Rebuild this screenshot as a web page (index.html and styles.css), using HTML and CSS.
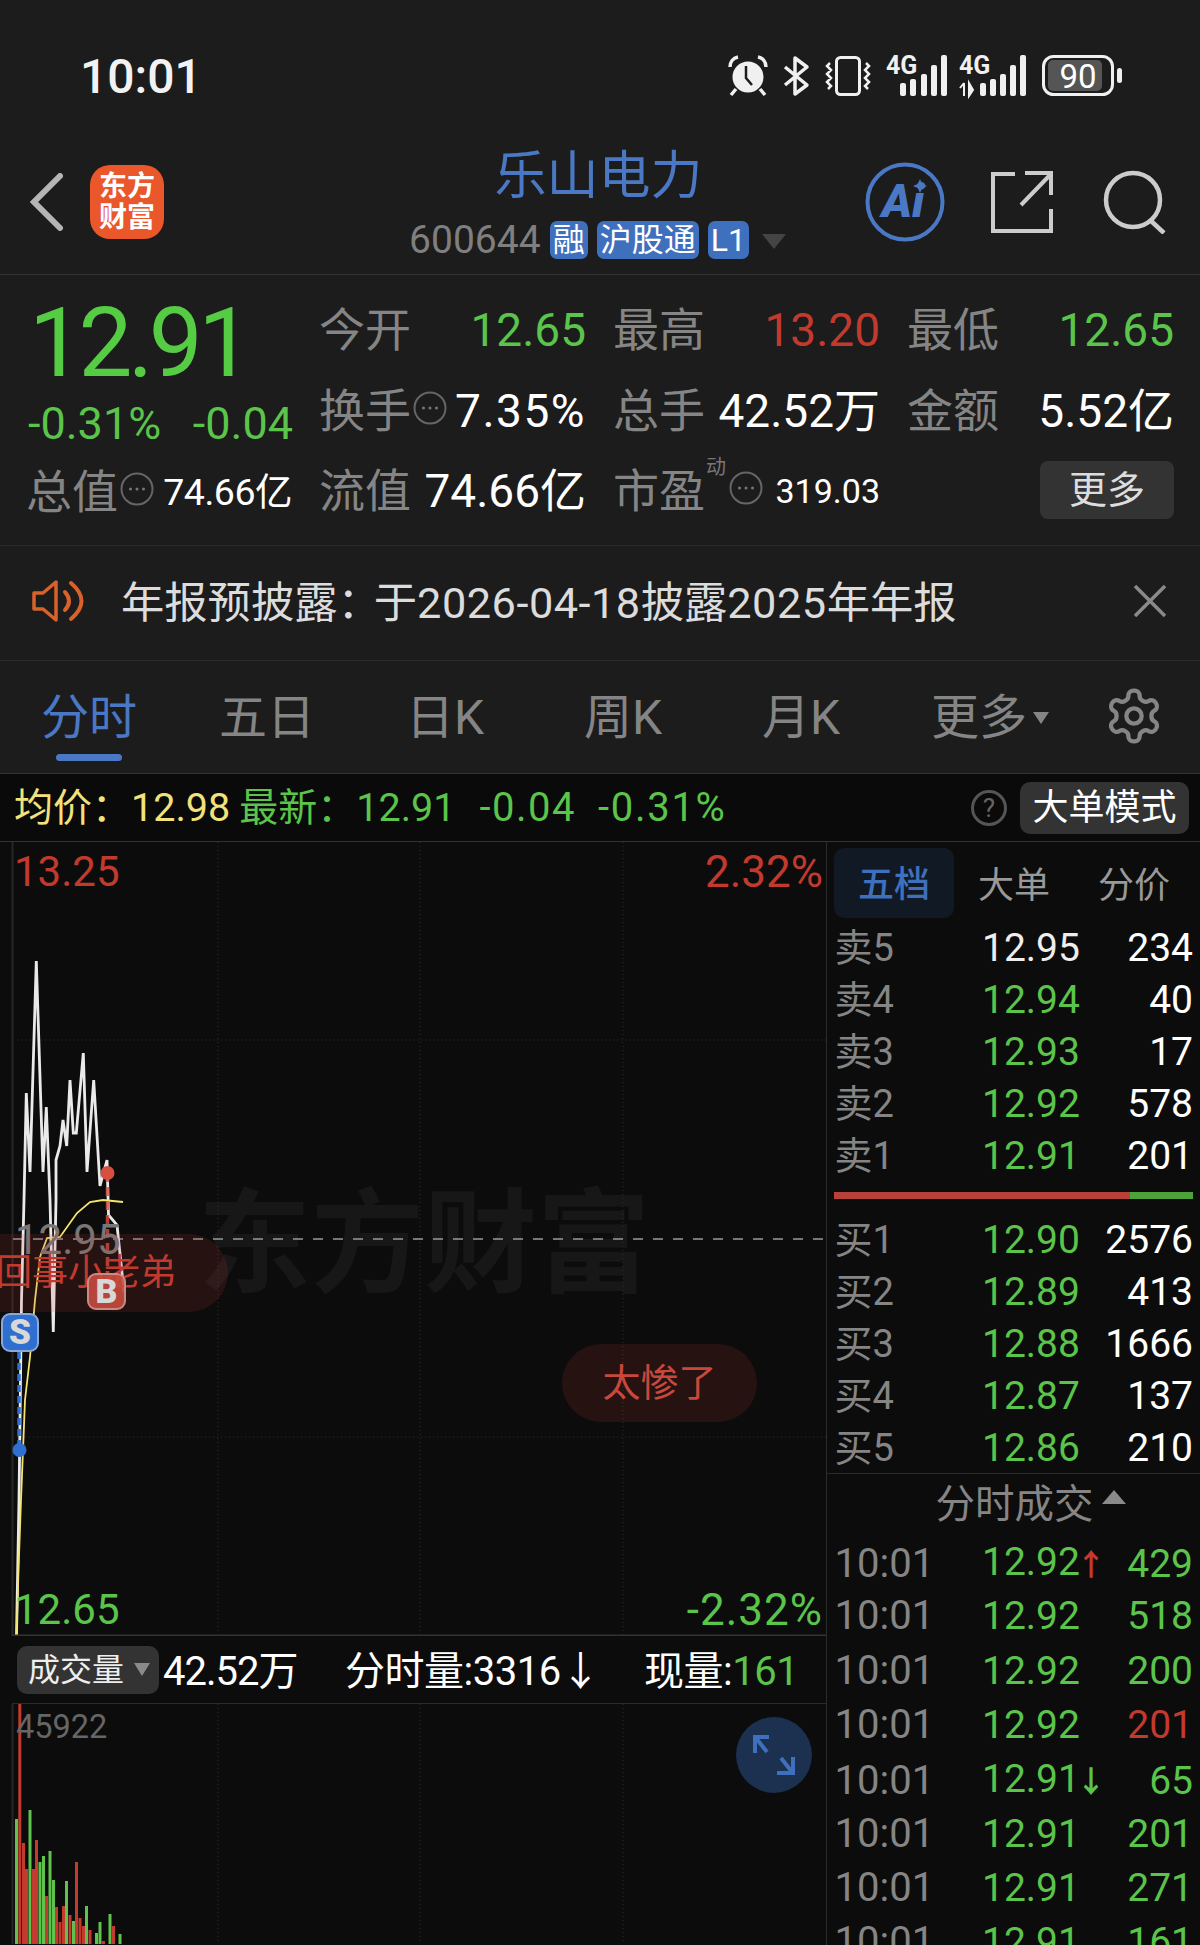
FILE: index.html
```html
<!DOCTYPE html>
<html lang="zh-CN">
<head>
<meta charset="utf-8">
<title>乐山电力</title>
<link rel="stylesheet" href="styles.css">
</head>
<body>
<svg class="defs" width="0" height="0">
  <symbol id="more" viewBox="0 0 34 34">
    <circle cx="17" cy="17" r="15.5" fill="none" stroke="#666" stroke-width="2"/>
    <circle cx="10.500" cy="17" r="1.500" fill="#777"/><circle cx="17" cy="17" r="1.500" fill="#777"/><circle cx="23.500" cy="17" r="1.500" fill="#777"/>
  </symbol>
</svg>
<div class="phone">
  <header class="status">
    <span class="clock">10:01</span>
    <div class="status-icons">
      <svg class="ic-alarm" width="38" height="40" viewBox="0 0 38 40"><circle cx="19" cy="21" r="15.500" fill="#f0f0f0"/><path d="M17 10v12l6 7" fill="none" stroke="#1c1c1c" stroke-width="2.500"/><path d="M1 11C1 6 4 2 9 1M37 11C37 6 34 2 29 1" fill="none" stroke="#f0f0f0" stroke-width="3.500"/><path d="M7 33l-5 6M31 33l5 6" stroke="#f0f0f0" stroke-width="3.500"/></svg>
      <svg class="ic-bt" width="27" height="40" viewBox="0 0 27 40"><path d="M2 11L24 29L12 38V2L24 11L2 29" fill="none" stroke="#f0f0f0" stroke-width="3.500" stroke-linejoin="round"/></svg>
      <svg class="ic-vib" width="46" height="40" viewBox="0 0 46 40"><rect x="11.500" y="1.500" width="23" height="37" rx="4" fill="none" stroke="#f0f0f0" stroke-width="3"/><path d="M5 7l-3 3 4 4-4 4 4 4-4 4 4 4-3 3M41 7l3 3-4 4 4 4-4 4 4 4-4 4 3 3" fill="none" stroke="#f0f0f0" stroke-width="2.500"/></svg>
      <svg class="ic-sig" width="61" height="41" viewBox="0 0 61 41"><text class="net" x="0" y="19">4G</text><rect x="14" y="28" width="6" height="13" rx="2"/><rect x="24" y="24" width="6" height="17" rx="2"/><rect x="35" y="19" width="6" height="22" rx="2"/><rect x="45" y="10" width="6" height="31" rx="2"/><rect x="55" y="0" width="6" height="41" rx="2"/></svg>
      <svg class="ic-sig" width="67" height="41" viewBox="0 0 67 41"><text class="net" x="0" y="19">4G</text><path d="M5 28v13M1 33l4-5M10 28v13l4-6z" stroke="#f0f0f0" stroke-width="2" fill="#f0f0f0"/><rect x="21" y="28" width="6" height="13" rx="2"/><rect x="31" y="24" width="6" height="17" rx="2"/><rect x="41" y="19" width="6" height="22" rx="2"/><rect x="51" y="10" width="6" height="31" rx="2"/><rect x="61" y="0" width="6" height="41" rx="2"/></svg>
      <svg class="ic-bat" width="80" height="41" viewBox="0 0 80 41"><rect x="6" y="5" width="54" height="31" rx="5" fill="#555"/><rect x="1.500" y="1.500" width="69" height="38" rx="10" fill="none" stroke="#f0f0f0" stroke-width="3"/><rect x="75" y="13" width="5" height="15" rx="2.500" fill="#f0f0f0"/><text class="bat" x="36" y="33" text-anchor="middle">90</text></svg>
    </div>
  </header>

  <nav class="nav">
    <div class="nav-left">
      <svg width="33" height="58" viewBox="0 0 33 58"><path d="M30 3L4 29l26 26" fill="none" stroke="#b5b5b5" stroke-width="6" stroke-linecap="round"/></svg>
      <div class="logo">东方<br>财富</div>
    </div>
    <div class="nav-mid">
      <div class="stock-name">乐山电力</div>
      <div class="stock-sub">
        <span class="code">600644</span>
        <span class="chip">融</span>
        <span class="chip">沪股通</span>
        <span class="chip">L1</span>
        <span class="tri-down"></span>
      </div>
    </div>
    <div class="nav-right">
      <svg width="80" height="80" viewBox="0 0 80 80"><circle cx="40" cy="40" r="37.500" fill="none" stroke="#4a78c4" stroke-width="4"/><text class="ai" x="38" y="55" text-anchor="middle">Ai</text><path d="M55 17l2.200 5 4.800 2-4.800 2-2.200 5-2.200-5-4.800-2 4.800-2z" fill="#4a78c4"/></svg>
      <svg class="share" width="62" height="62" viewBox="0 0 62 62"><path d="M24 3H2V60H60V38M30 34L59 4M34 2H60V24" fill="none" stroke="#ccc" stroke-width="4"/></svg>
      <svg class="search" width="64" height="64" viewBox="0 0 64 64"><circle cx="30" cy="30" r="27" fill="none" stroke="#ccc" stroke-width="4.500"/><path d="M47 50l14 13" stroke="#ccc" stroke-width="4.500"/></svg>
    </div>
  </nav>

  <section class="quote">
    <div class="quote-left">
      <div class="price">12.91</div>
      <div class="change"><span>-0.31%</span><span>-0.04</span></div>
      <div class="cell"><span class="lbl">总值<svg class="more"><use href="#more"/></svg></span><span class="val small">74.66亿</span></div>
    </div>
    <div class="quote-grid">
      <div class="cell"><span class="lbl">今开</span><span class="val green">12.65</span></div>
      <div class="cell"><span class="lbl">最高</span><span class="val red">13.20</span></div>
      <div class="cell"><span class="lbl">最低</span><span class="val green">12.65</span></div>
      <div class="cell"><span class="lbl">换手<svg class="more"><use href="#more"/></svg></span><span class="val spaced">7.35%</span></div>
      <div class="cell"><span class="lbl">总手</span><span class="val">42.52万</span></div>
      <div class="cell"><span class="lbl">金额</span><span class="val">5.52亿</span></div>
      <div class="cell"><span class="lbl">流值</span><span class="val">74.66亿</span></div>
      <div class="cell"><span class="lbl">市盈<sup class="dyn">动</sup><svg class="more"><use href="#more"/></svg></span><span class="val tiny">319.03</span></div>
      <div class="cell end"><button class="more-btn">更多</button></div>
    </div>
  </section>

  <section class="notice">
    <svg width="56" height="44" viewBox="0 0 56 44"><path d="M2 14H11L24 3V41L11 30H2Z" fill="none" stroke="#d9622b" stroke-width="3.500" stroke-linejoin="round"/><path d="M33 13Q41 22 33 31M39 4Q60 22 39 40" fill="none" stroke="#d9622b" stroke-width="4" stroke-linecap="round"/></svg>
    <span class="notice-text">年报预披露<span class="tight">：</span>于<span class="num">2026-04-18</span>披露<span class="num">2025</span>年年报</span>
    <svg class="notice-x" width="36" height="36" viewBox="0 0 36 36"><path d="M3 3l30 30M33 3L3 33" stroke="#8a8a8a" stroke-width="3.500"/></svg>
  </section>

  <nav class="tabs">
    <span class="tab active">分时</span>
    <span class="tab">五日</span>
    <span class="tab">日K</span>
    <span class="tab">周K</span>
    <span class="tab">月K</span>
    <span class="tab wide">更多<i class="tab-tri"></i></span>
    <svg class="gear" width="56" height="56" viewBox="1 1 22 22"><path d="M12.220 2h-.44a2 2 0 0 0-2 2v.18a2 2 0 0 1-1 1.730l-.43.25a2 2 0 0 1-2 0l-.15-.08a2 2 0 0 0-2.730.73l-.22.38a2 2 0 0 0 .73 2.730l.15.1a2 2 0 0 1 1 1.720v.51a2 2 0 0 1-1 1.740l-.15.09a2 2 0 0 0-.73 2.730l.22.38a2 2 0 0 0 2.730.73l.15-.08a2 2 0 0 1 2 0l.43.25a2 2 0 0 1 1 1.730V20a2 2 0 0 0 2 2h.44a2 2 0 0 0 2-2v-.18a2 2 0 0 1 1-1.730l.43-.25a2 2 0 0 1 2 0l.15.08a2 2 0 0 0 2.730-.73l.22-.39a2 2 0 0 0-.73-2.730l-.15-.08a2 2 0 0 1-1-1.740v-.5a2 2 0 0 1 1-1.740l.15-.09a2 2 0 0 0 .73-2.730l-.22-.38a2 2 0 0 0-2.730-.73l-.15.08a2 2 0 0 1-2 0l-.43-.25a2 2 0 0 1-1-1.730V4a2 2 0 0 0-2-2z" fill="none" stroke="#858585" stroke-width="1.700"/><circle cx="12" cy="12" r="3" fill="none" stroke="#858585" stroke-width="1.700"/></svg>
  </nav>

  <div class="infobar">
    <span class="yellow">均价：</span><span class="yellow ib-a">12.98</span>
    <span class="green ib-b">最新：</span><span class="green ib-c">12.91</span>
    <span class="green ib-d">-0.04</span><span class="green ib-e">-0.31%</span>
    <span class="help">?</span>
    <button class="mode-btn">大单模式</button>
  </div>

  <main class="board">
    <div class="chart-col">
      <div class="chart">
        <div class="watermark">东方财富</div>
        <svg class="chart-svg" width="826" height="794" viewBox="0 842 826 794">
          <path d="M12.500 842V1636" stroke="#262626" stroke-width="2"/>
          <path class="dots" d="M218 842V1636M420 842V1636M623 842V1636M13 1040H826M13 1437H826"/>
          <path d="M13 1239H826" stroke="#9a9a9a" stroke-width="1.500" stroke-dasharray="10 10"/>
          <polyline class="line-white" points="16.500,1636 19,1500 21.500,1300 24,1200 26.300,1093 30,1172 36.300,961 43,1172 46.300,1107 50,1200 53.300,1332 56,1200 56,1160 60,1146 63,1120 66.700,1146 70,1080 73.300,1133 76.300,1133 83.300,1053 87,1172 93.700,1080 100,1186 107,1160 108.500,1215 117,1225 124,1292"/>
          <polyline class="line-yellow" points="16.500,1636 18.500,1570 21,1500 25,1400 30,1357 35,1300 40,1257 47,1238 60,1237 77,1213 90,1202 103,1200 123,1202"/>
          <path d="M19 1352V1450" stroke="#2f6fd0" stroke-width="3.500" stroke-dasharray="7 4"/>
          <path d="M107.500 1173V1273" stroke="#d6503f" stroke-width="3.500" stroke-dasharray="9 5" opacity=".8"/>
          <circle cx="107.500" cy="1173" r="7" fill="#d6503f"/>
          <circle cx="19.500" cy="1450" r="7" fill="#2f6fd0"/>
          <path d="M12 1635.500H826" stroke="#333" stroke-width="2"/>
        </svg>
        <span class="ax tl red">13.25</span>
        <span class="ax tr red">2.32%</span>
        <span class="ax bl green">12.65</span>
        <span class="ax br green">-2.32%</span>
        <span class="ax mid">12.95</span>
        <div class="pill pill-a"><span>回事小老弟</span></div>
        <div class="pill pill-b">太惨了</div>
        <span class="mark mark-b">B</span>
        <span class="mark mark-s">S</span>
      </div>
      <div class="vol-head">
        <button class="vol-btn">成交量<i class="vol-tri"></i></button>
        <span class="vh-a">42.52万</span>
        <span class="vh-b">分时量:3316↓</span>
        <span class="vh-c">现量:<em class="green">161</em></span>
      </div>
      <div class="vol">
        <svg class="vol-svg" width="826" height="240" viewBox="0 1705 826 240">
          <path d="M12.500 1705V1945" stroke="#262626" stroke-width="2"/>
          <path class="dots" d="M218 1705V1945M420 1705V1945M623 1705V1945"/>
          <g class="bars-g">
            <rect x="15" y="1820" width="3" height="125"/><rect x="28.500" y="1811" width="3" height="134"/><rect x="38.500" y="1863" width="3" height="82"/><rect x="42" y="1857" width="3" height="88"/><rect x="48.500" y="1852" width="3" height="93"/><rect x="52" y="1881" width="3" height="64"/><rect x="65" y="1882" width="3" height="63"/><rect x="72" y="1922" width="3" height="23"/><rect x="85" y="1907" width="3" height="38"/><rect x="95" y="1934" width="3" height="11"/><rect x="98.500" y="1923" width="3" height="22"/><rect x="108.500" y="1915" width="3" height="30"/><rect x="118.500" y="1935" width="3" height="10"/>
          </g>
          <g class="bars-r">
            <rect x="18.300" y="1705" width="3" height="240"/><rect x="22" y="1844" width="3" height="101"/><rect x="25" y="1870" width="3" height="75"/><rect x="32" y="1870" width="3" height="75"/><rect x="35" y="1841" width="3" height="104"/><rect x="45" y="1897" width="3" height="48"/><rect x="55" y="1908" width="3" height="37"/><rect x="58.500" y="1923" width="3" height="22"/><rect x="62" y="1907" width="3" height="38"/><rect x="68.500" y="1916" width="3" height="29"/><rect x="75" y="1863" width="3" height="82"/><rect x="78.500" y="1919" width="3" height="26"/><rect x="82" y="1927" width="3" height="18"/><rect x="88.500" y="1931" width="3" height="14"/><rect x="102" y="1942" width="3" height="3"/><rect x="112" y="1927" width="3" height="18"/>
          </g>
        </svg>
        <span class="vol-max">45922</span>
        <svg class="expand" width="76" height="76" viewBox="0 0 76 76"><circle cx="38" cy="38" r="38" fill="#1c3050"/><path d="M19 36V20H33M20 21L31 35M57 40V56H41M56 55L45 41" fill="none" stroke="#3f70bd" stroke-width="4"/></svg>
      </div>
    </div>

    <aside class="book">
      <div class="book-tabs">
        <span class="bt active">五档</span>
        <span class="bt">大单</span>
        <span class="bt">分价</span>
      </div>
      <div class="rows">
        <div class="row"><span class="k">卖5</span><span class="p white">12.95</span><span class="q">234</span></div>
        <div class="row"><span class="k">卖4</span><span class="p">12.94</span><span class="q">40</span></div>
        <div class="row"><span class="k">卖3</span><span class="p">12.93</span><span class="q">17</span></div>
        <div class="row"><span class="k">卖2</span><span class="p">12.92</span><span class="q">578</span></div>
        <div class="row"><span class="k">卖1</span><span class="p">12.91</span><span class="q">201</span></div>
      </div>
      <div class="ratio"><span class="ratio-r"></span><span class="ratio-g"></span></div>
      <div class="rows">
        <div class="row"><span class="k">买1</span><span class="p">12.90</span><span class="q">2576</span></div>
        <div class="row"><span class="k">买2</span><span class="p">12.89</span><span class="q">413</span></div>
        <div class="row"><span class="k">买3</span><span class="p">12.88</span><span class="q">1666</span></div>
        <div class="row"><span class="k">买4</span><span class="p">12.87</span><span class="q">137</span></div>
        <div class="row"><span class="k">买5</span><span class="p">12.86</span><span class="q">210</span></div>
      </div>
      <div class="trades-head">分时成交<i class="tri-up"></i></div>
      <div class="trades">
        <div class="row tr"><span class="k">10:01</span><span class="p">12.92<b class="up">↑</b></span><span class="q green">429</span></div>
        <div class="row tr"><span class="k">10:01</span><span class="p">12.92</span><span class="q green">518</span></div>
        <div class="row tr"><span class="k">10:01</span><span class="p">12.92</span><span class="q green">200</span></div>
        <div class="row tr"><span class="k">10:01</span><span class="p">12.92</span><span class="q red">201</span></div>
        <div class="row tr"><span class="k">10:01</span><span class="p">12.91<b class="down">↓</b></span><span class="q green">65</span></div>
        <div class="row tr"><span class="k">10:01</span><span class="p">12.91</span><span class="q green">201</span></div>
        <div class="row tr"><span class="k">10:01</span><span class="p">12.91</span><span class="q green">271</span></div>
        <div class="row tr"><span class="k">10:01</span><span class="p">12.91</span><span class="q green">161</span></div>
      </div>
    </aside>
  </main>
</div>
</body>
</html>
```

FILE: styles.css
```css
* { box-sizing: border-box; }
html, body { margin: 0; padding: 0; height: 1945px; overflow: hidden; background: #1c1c1c; }
body, button { font-family: Roboto, "Noto Sans CJK SC", sans-serif; }
button { border: 0; padding: 0; }
.defs { position: absolute; }
.phone { width: 1200px; height: 1945px; overflow: hidden; display: flex; flex-direction: column; }
.green { color: #5bc44a; }
.red { color: #c23a2e; }
.yellow { color: #f2e27a; }
.white { color: #eee; }
em { font-style: normal; }

/* status */
.status { height: 130px; padding: 23px 78px 0 80px; display: flex; align-items: center; justify-content: space-between; flex: none; }
.clock { font-size: 48px; font-weight: 500; color: #f2f2f2; line-height: 60px; }
.status-icons { display: flex; align-items: center; gap: 16px; margin-top: -2px; }
.status-icons svg { display: block; overflow: visible; }
.ic-bt { margin-right: -1px; }
.ic-sig { fill: #f0f0f0; margin-left: -1px; }
.ic-sig + .ic-sig { margin-left: -4px; }
.net { font: 700 25px "Liberation Sans Narrow", Roboto, sans-serif; fill: #f0f0f0; }
.bat { font: 400 33px Roboto, sans-serif; fill: #fff; }

/* nav */
.nav { height: 145px; flex: none; border-bottom: 1px solid #333; display: grid; grid-template-columns: 1fr auto 1fr; align-items: center; padding: 0 33px 0 30px; }
.nav-left { display: flex; align-items: center; gap: 27px; }
.logo { width: 74px; height: 74px; border-radius: 20px; background: #e9572b; color: #fff; font-size: 28px; font-weight: 700; line-height: 31px; text-align: center; padding-top: 4px; font-family: "Noto Sans CJK SC", sans-serif; }
.nav-mid { display: flex; flex-direction: column; align-items: center; gap: 13px; }
.stock-name { font-size: 52px; line-height: 62px; color: #4a78c4; }
.stock-sub { display: flex; align-items: center; height: 38px; gap: 9px; margin-right: 2px; }
.code { font-size: 39px; color: #7f7f7f; line-height: 38px; }
.chip { background: #3f70bd; color: #fff; font-size: 32px; line-height: 38px; height: 38px; padding: 0 3px; border-radius: 7px; }
.chip:first-of-type { padding: 0 4px; }
.tri-down { width: 0; height: 0; border: 12px solid transparent; border-top: 15px solid #444; border-bottom: 0; margin: 4px 0 0 4px; }
.nav-right { display: flex; align-items: center; justify-content: flex-end; gap: 45px; }
.nav-right svg { display: block; }
.nav-right .share { margin-left: 1px; }
.nav-right .search { margin-left: 5px; }
.ai { font: italic 900 46px Roboto, sans-serif; fill: #4a78c4; }

/* quote */
.quote { height: 271px; flex: none; border-bottom: 1px solid #2a2a2a; display: flex; gap: 29px; padding: 0 26px 0 28px; }
.quote-left { width: 265px; padding-top: 22px; }
.price { font-size: 96px; line-height: 92px; color: #55cc44; letter-spacing: -4.500px; margin-left: 1px; }
.change { display: flex; justify-content: space-between; font-size: 45px; line-height: 50px; color: #5bc44a; margin: 10px -1px 0 0; }
.quote-left .cell { margin-top: 3px; height: 80px; }
.quote-grid { flex: 1; padding-top: 15px; display: grid; grid-template-columns: repeat(3, 265px); grid-auto-rows: 80.500px; column-gap: 29px; }
.cell { display: flex; align-items: center; justify-content: space-between; white-space: nowrap; }
.cell.end { justify-content: flex-end; }
.lbl { display: flex; align-items: center; font-size: 46px; line-height: 50px; color: #858585; position: relative; margin-left: -2px; }
.val { font-size: 46px; line-height: 50px; color: #fff; }
.val.green { color: #5bc44a; }
.val.red { color: #c23a2e; }
.val.spaced { letter-spacing: 1.500px; }
.val.small { font-size: 37.500px; letter-spacing: -.5px; }
.val.tiny { font-size: 34px; }
.more { width: 34px; height: 34px; margin: -6px 0 0 2px; }
.dyn { font-size: 20px; line-height: 20px; align-self: flex-start; margin: -9px 1px 0 1px; color: #777; }
.more-btn { width: 134px; height: 58px; background: #333; color: #ddd; border-radius: 8px; font-size: 38px; line-height: 58px; margin-top: -2px; }

/* notice */
.notice { height: 115px; flex: none; border-bottom: 1px solid #2a2a2a; display: flex; align-items: center; padding: 0 32px 4px; }
.notice svg { flex: none; }
.notice-text { font-size: 43.300px; color: #dcdcdc; margin: -5px 0 0 33px; white-space: nowrap; }
.tight { letter-spacing: -7px; }
.num { letter-spacing: .5px; }
.notice-x { margin-left: auto; }

/* tabs */
.tabs { height: 113px; flex: none; border-bottom: 1px solid #333; display: flex; align-items: center; }
.tab { width: 178px; text-align: center; font-size: 48px; line-height: 60px; color: #858585; position: relative; margin-top: 2px; }
.tab.active { color: #4a78c4; }
.tab.active::after { content: ""; position: absolute; left: 56px; top: 66px; width: 66px; height: 7px; border-radius: 4px; background: #4a78c4; }
.tab.wide { width: 200px; padding-right: 4px; margin-left: 2px; }
.tab-tri { display: inline-block; width: 0; height: 0; border: 8px solid transparent; border-top: 12px solid #858585; border-bottom: 0; margin: 0 0 10px 6px; }
.gear { margin: -2px 0 0 14px; flex: none; }

/* info bar */
.infobar { height: 68px; flex: none; background: #0a0a0a; border-bottom: 1px solid #333; display: flex; align-items: center; padding: 0 11px 0 14px; font-size: 39px; line-height: 50px; white-space: nowrap; }
.ib-a { margin-left: 0; font-size: 39.500px; }
.ib-b { margin-left: 9px; }
.ib-c { margin-left: 0; font-size: 39.500px; }
.ib-d { margin-left: 24px; font-size: 40px; letter-spacing: 1.500px; }
.ib-e { margin-left: 22px; font-size: 40px; letter-spacing: 1.700px; }
.help { margin-left: auto; width: 36px; height: 36px; border: 3px solid #555; border-radius: 50%; color: #666; font-size: 26px; line-height: 30px; text-align: center; }
.mode-btn { margin-left: 13px; width: 169px; height: 52px; border-radius: 10px; background: #333; color: #fff; font-size: 36px; line-height: 52px; }

/* board */
.board { flex: 1; display: flex; background: #0c0c0c; min-height: 0; }
.chart-col { width: 826px; flex: none; display: flex; flex-direction: column; }
.chart { height: 794px; flex: none; position: relative; overflow: hidden; }
.chart-svg { display: block; position: relative; }
.dots { stroke: #2e2e2e; stroke-width: 1; stroke-dasharray: 1 3; fill: none; }
.line-white { fill: none; stroke: #eaeaea; stroke-width: 2.800; }
.line-yellow { fill: none; stroke: #f4e56e; stroke-width: 1.800; }
.watermark { position: absolute; left: 198px; top: 332px; font-size: 113px; line-height: 120px; font-weight: 700; color: #171717; white-space: nowrap; font-family: "Noto Sans CJK SC", sans-serif; }
.ax { position: absolute; font-size: 44px; line-height: 50px; white-space: nowrap; }
.tl { left: 14px; top: 5px; font-size: 42px; }
.tr { right: 3px; top: 5px; }
.bl { left: 14px; top: 743px; font-size: 42px; }
.br { right: 3px; top: 743px; letter-spacing: 1px; }
.mid { left: 15px; top: 373px; color: #777; font-size: 42px; }
.pill { position: absolute; border-radius: 39px; background: rgba(190, 60, 50, .14); color: #c23a2e; white-space: nowrap; }
.pill-a { left: -60px; top: 392px; width: 288px; height: 78px; font-size: 36px; line-height: 78px; }
.pill-a span { position: absolute; right: 52px; }
.pill-b { left: 562px; top: 502px; width: 195px; height: 78px; font-size: 38px; line-height: 78px; text-align: center; color: #c8483c; }
.mark { position: absolute; border-radius: 9px; color: #d8d8d8; font-weight: 900; text-align: center; }
.mark-b { left: 87px; top: 431px; width: 39px; height: 37px; background: rgba(200, 75, 62, .9); border: 2px solid #c88a82; font-size: 34px; line-height: 33px; }
.mark-s { left: 1px; top: 471px; width: 38px; height: 39px; background: #2f6fcf; border: 2px solid #8aa8d8; font-size: 35px; line-height: 35px; }

.vol-head { height: 68px; flex: none; border-bottom: 1px solid #2a2a2a; margin-left: 12px; display: flex; align-items: center; padding: 0 0 3px 5px; color: #fff; font-size: 40px; white-space: nowrap; }
.vol-btn { width: 142px; height: 48px; border-radius: 10px; background: #333; color: #eee; font-size: 32px; line-height: 48px; text-align: left; padding-left: 11px; display: flex; align-items: center; margin-bottom: -3px; }
.vol-tri { width: 0; height: 0; border: 8px solid transparent; border-top: 13px solid #8a8a8a; border-bottom: 0; margin-left: 10px; }
.vh-a { margin-left: 4px; letter-spacing: -1px; width: 182px; }
.vh-b { font-size: 40px; width: 299px; letter-spacing: -.5px; }
.vh-c { font-size: 40px; letter-spacing: -.5px; }
.vol { flex: 1; position: relative; min-height: 0; overflow: hidden; }
.vol-svg { display: block; }
.bars-g { fill: #5fc24c; }
.bars-r { fill: #c23b2e; }
.vol-max { position: absolute; left: 16px; top: 3px; font-size: 32.500px; line-height: 40px; color: #666; }
.expand { position: absolute; left: 736px; top: 13px; }

/* order book */
.book { flex: 1; border-left: 1px solid #2c2c2c; display: flex; flex-direction: column; min-width: 0; }
.book-tabs { display: flex; height: 70px; margin-top: 6px; padding-left: 7px; flex: none; }
.bt { font-size: 36px; line-height: 74px; color: #999; width: 100px; margin-left: 19px; text-align: center; margin-top: 1px; }
.bt:nth-child(2) { width: 72px; margin-left: 24px; }
.bt:nth-child(3) { width: 72px; margin-left: 48px; }
.bt.active { width: 120px; margin: 0; border-radius: 10px; background: #111a24; color: #3f70bd; font-weight: 500; }
.rows { padding-top: 4px; flex: none; }
.row { display: grid; grid-template-columns: 147.500px 1fr auto; height: 52px; align-items: center; padding: 0 7px 0 7.500px; font-size: 39px; line-height: 52px; }
.rows + .ratio + .rows { padding-top: 0; margin-top: 15px; }
.k { color: #858585; font-size: 38px; }
.p { color: #5bc44a; }
.p.white { color: #eee; }
.q { color: #fff; text-align: right; }
.q.green { color: #5bc44a; }
.q.red { color: #c23a2e; }
.ratio { display: flex; height: 7px; margin: 10px 7px 0 7px; flex: none; }
.ratio-r { width: 296px; background: #b8423a; }
.ratio-g { flex: 1; background: #4da33a; }
.trades-head { height: 62px; flex: none; margin-top: -1px; border-top: 1px solid #2a2a2a; display: flex; align-items: center; justify-content: center; font-size: 39.500px; color: #858585; padding: 0 0 8px 34px; }
.tri-up { width: 0; height: 0; border: 12px solid transparent; border-bottom: 14px solid #8a8a8a; border-top: 0; margin: -8px 0 0 8px; }
.row.tr { height: 54.300px; line-height: 54px; }
.tr .k { font-size: 40px; }
.tr .p b { font-weight: 700; font-size: 30px; margin-left: -4px; }
.up { color: #c23a2e; }
.down { color: #5bc44a; }
```
